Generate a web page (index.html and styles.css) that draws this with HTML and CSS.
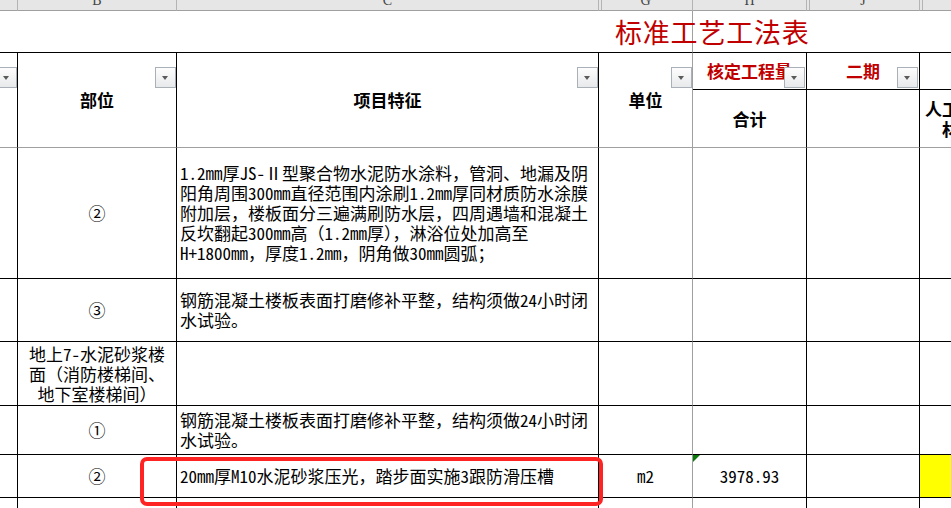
FILE: index.html
```html
<!DOCTYPE html>
<html lang="zh-CN">
<head>
  <meta charset="UTF-8" />
  <title>标准工艺工法表</title>
  <link rel="stylesheet" href="styles.css">
</head>
<body>
  <div class="sheet">
    <!-- column letters -->
    <div class="col-head"></div>
    <div class="col-head"><span>B</span></div>
    <div class="col-head"><span>C</span></div>
    <div class="col-head hidden-before"><span>G</span></div>
    <div class="col-head"><span>H</span></div>
    <div class="col-head hidden-before"><span>J</span></div>
    <div class="col-head hidden-before"><span>K</span></div>

    <!-- title row -->
    <div class="title-blank span3"></div>
    <div class="title-cell">标准工艺工法表</div>
    <div class="title-blank span3"></div>

    <!-- header -->
    <div class="cell head tall"><i class="filter"></i></div>
    <div class="cell head tall">部位<i class="filter"></i></div>
    <div class="cell head tall">项目特征<i class="filter"></i></div>
    <div class="cell head tall grey">单位<i class="filter"></i></div>
    <div class="cell head red">核定工程量<i class="filter"></i></div>
    <div class="cell head red">二期<i class="filter"></i></div>
    <div class="cell head"></div>
    <div class="cell head sub">合计</div>
    <div class="cell head sub"></div>
    <div class="cell head sub">人工费单价<br>材料费</div>

    <!-- rows -->
    <div class="cell"></div>
    <div class="cell">②</div>
    <div class="cell text">1.2mm厚JS-Ⅱ型聚合物水泥防水涂料，管洞、地漏及阴<br>阳角周围300mm直径范围内涂刷1.2mm厚同材质防水涂膜<br>附加层，楼板面分三遍满刷防水层，四周遇墙和混凝土<br>反坎翻起300mm高（1.2mm厚），淋浴位处加高至<br>H+1800mm，厚度1.2mm，阴角做30mm圆弧；</div>
    <div class="cell grey"></div>
    <div class="cell"></div>
    <div class="cell"></div>
    <div class="cell"></div>

    <div class="cell"></div>
    <div class="cell">③</div>
    <div class="cell text">钢筋混凝土楼板表面打磨修补平整，结构须做24小时闭<br>水试验。</div>
    <div class="cell grey"></div>
    <div class="cell"></div>
    <div class="cell"></div>
    <div class="cell"></div>

    <div class="cell"></div>
    <div class="cell">地上7-水泥砂浆楼<br>面（消防楼梯间、<br>地下室楼梯间）</div>
    <div class="cell text"></div>
    <div class="cell grey"></div>
    <div class="cell"></div>
    <div class="cell"></div>
    <div class="cell"></div>

    <div class="cell"></div>
    <div class="cell">①</div>
    <div class="cell text">钢筋混凝土楼板表面打磨修补平整，结构须做24小时闭<br>水试验。</div>
    <div class="cell grey"></div>
    <div class="cell"></div>
    <div class="cell"></div>
    <div class="cell"></div>

    <div class="cell"></div>
    <div class="cell">②</div>
    <div class="cell text">20mm厚M10水泥砂浆压光，踏步面实施3跟防滑压槽</div>
    <div class="cell grey">m2</div>
    <div class="cell flagged">3978.93</div>
    <div class="cell"></div>
    <div class="cell yellow"></div>

    <div class="cell"></div>
    <div class="cell"></div>
    <div class="cell text"></div>
    <div class="cell grey"></div>
    <div class="cell"></div>
    <div class="cell"></div>
    <div class="cell"></div>

    <div class="mark"></div>
  </div>
</body>
</html>
```

FILE: styles.css
```css
:root {
  --grid: #a0a0a0;
  --line: #000;
  --red: #c00000;
}

* {
  margin: 0;
  padding: 0;
  box-sizing: border-box;
}

body {
  background: #fff;
  color: #000;
  overflow: hidden;
  font-family: "Noto Sans Mono CJK SC", "Noto Sans CJK SC", sans-serif;
  font-size: 17px;
}

.sheet {
  position: relative;
  display: grid;
  width: 1016px;
  grid-template-columns: 18px 159px 422px 94px 114px 113px 96px;
  grid-template-rows: 11px 42px 37px 58px 131px 63px 64px 49px 43px 40px;
}

/* column letter bar */
.col-head {
  background: #e6e6e6;
  border-right: 1px solid #b4b4b4;
  border-bottom: 1px solid var(--grid);
  overflow: hidden;
  display: flex;
  justify-content: center;
  align-items: flex-start;
}

.col-head span {
  margin-top: -6px;
  font-family: "Liberation Serif", serif;
  font-size: 14px;
  line-height: 14px;
  color: #444;
}

.hidden-before {
  box-shadow: inset 2px 0 #e6e6e6, inset 3px 0 #b4b4b4;
}

/* title row */
.span3 {
  grid-column: span 3;
}

.title-blank {
  border-bottom: 1px solid var(--line);
}

.title-cell {
  border-right: 1px solid var(--grid);
  border-bottom: 1px solid var(--line);
  padding-left: 16px;
  display: flex;
  align-items: center;
  white-space: nowrap;
  font-family: "Noto Sans CJK SC", sans-serif;
  font-size: 27px;
  letter-spacing: 0.8px;
  color: var(--red);
}

/* cells */
.cell {
  position: relative;
  border-right: 1px solid var(--line);
  border-bottom: 1px solid var(--line);
  display: flex;
  align-items: center;
  justify-content: center;
  text-align: center;
  line-height: 20px;
  white-space: nowrap;
  overflow: hidden;
}

.cell.grey {
  border-right-color: var(--grid);
}

.cell.text {
  justify-content: flex-start;
  text-align: left;
  padding-left: 3px;
}

.head {
  font-weight: 700;
  overflow: visible;
}

.head.tall {
  grid-row: span 2;
  border-bottom-color: var(--grid);
}

.head.sub {
  border-bottom-color: var(--grid);
  overflow: hidden;
}

.head.red {
  color: var(--red);
  padding-bottom: 1px;
}

.filter {
  position: absolute;
  top: 14px;
  right: 0;
  width: 21px;
  height: 21px;
  border: 1px solid #aab0b8;
  background: linear-gradient(#fdfdfd, #e8e9eb);
}

.head.red .filter {
  right: 1px;
}

.filter::after {
  content: "";
  position: absolute;
  left: 6px;
  top: 8px;
  border-left: 3.5px solid transparent;
  border-right: 3.5px solid transparent;
  border-top: 4px solid #5a5a5a;
}

.flagged::before {
  content: "";
  position: absolute;
  top: 0;
  left: 0;
  border-top: 7px solid #0a7a0a;
  border-right: 7px solid transparent;
}

.yellow {
  background: #ffff00;
}

/* red annotation box */
.mark {
  position: absolute;
  left: 140px;
  top: 457px;
  width: 463px;
  height: 49px;
  border: 4px solid #ff2424;
  border-radius: 7px;
}
```
